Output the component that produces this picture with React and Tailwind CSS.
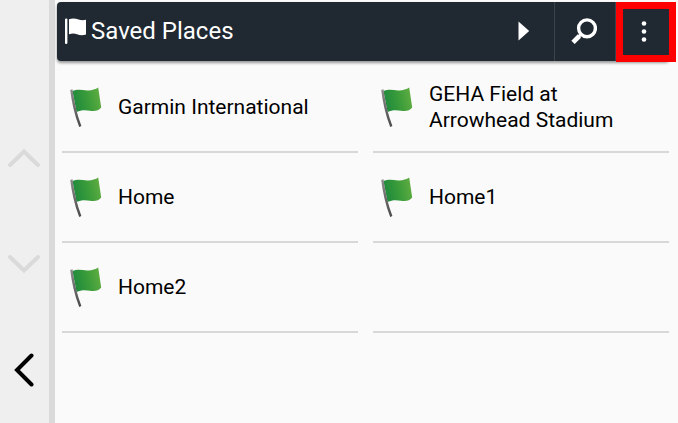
import { useState } from "react";

const places = [
  { id: 1, lines: ["Garmin International"] },
  { id: 2, lines: ["GEHA Field at", "Arrowhead Stadium"] },
  { id: 3, lines: ["Home"] },
  { id: 4, lines: ["Home1"] },
  { id: 5, lines: ["Home2"] },
];

function GreenFlag() {
  return (
    <svg width="32" height="42" viewBox="0 0 32 42" className="shrink-0" aria-hidden="true">
      <defs>
        <linearGradient id="flagGreen" x1="0" y1="0.4" x2="1" y2="0.2">
          <stop offset="0" stopColor="#1f8a3d" />
          <stop offset="0.5" stopColor="#3a9c3a" />
          <stop offset="1" stopColor="#63ae42" />
        </linearGradient>
        <linearGradient id="flagPole" x1="0" y1="0" x2="0" y2="1">
          <stop offset="0" stopColor="#8b8b8b" />
          <stop offset="1" stopColor="#4a4a4a" />
        </linearGradient>
      </defs>
      <path
        d="M2.4 5C7 3 12 3.9 17 4.4C21.5 4.6 25.5 3.6 28.2 1.6L31.2 21.6C29 24.8 25 25.4 20 24.8C15 24 11 24 6.6 26Z"
        fill="url(#flagGreen)"
      />
      <path d="M0.2 4L2.5 3.2C4.2 16 7 28.5 11.4 40L9.2 41C4.4 28.5 1.6 16 0.2 4Z" fill="url(#flagPole)" />
    </svg>
  );
}

function TitleFlag() {
  return (
    <svg width="22" height="26" viewBox="0 0 22 26" className="shrink-0" fill="#fff" aria-hidden="true">
      <rect x="0" y="0.5" width="2.4" height="25.5" rx="1" />
      <path d="M4 1.2C7 0 10.5 0.2 13.5 1.4C16 2.4 18.5 2.4 21 1.8V16.6C18 17.6 15 17.6 12 16.2C9.5 15.2 7 15.2 4 16.2Z" />
    </svg>
  );
}

function Sidebar({ onBack }) {
  return (
    <nav className="flex w-[55px] shrink-0 flex-col items-center border-r-[6px] border-[#dadada] bg-[#efefef] pt-[144px] pr-0.5">
      <button type="button" aria-label="Scroll up" disabled className="flex h-7 w-full items-center justify-center">
        <svg width="34" height="20" viewBox="0 0 34 20" fill="none" stroke="#dadada" strokeWidth="4" strokeLinecap="round">
          <path d="M3 17L17 3.5L31 17" />
        </svg>
      </button>
      <button type="button" aria-label="Scroll down" disabled className="mt-[78px] flex h-7 w-full items-center justify-center">
        <svg width="34" height="20" viewBox="0 0 34 20" fill="none" stroke="#dadada" strokeWidth="4" strokeLinecap="round">
          <path d="M3 3L17 16.5L31 3" />
        </svg>
      </button>
      <button type="button" aria-label="Back" onClick={onBack} className="mt-[72px] flex h-10 w-full items-center justify-center">
        <svg width="20" height="36" viewBox="0 0 20 36" fill="none" stroke="#000" strokeWidth="4" strokeLinecap="round">
          <path d="M17.5 3.5L3 18L17.5 32.5" />
        </svg>
      </button>
    </nav>
  );
}

function Header({ onMenu }) {
  return (
    <header className="mr-[9px] ml-[2px] flex h-[59px] rounded bg-[#202932] text-white shadow-[0_2px_3px_rgba(0,0,0,0.4)]">
      <div className="flex flex-1 items-center gap-1 pb-0.5 pl-2">
        <TitleFlag />
        <h1 className="text-2xl">Saved Places</h1>
      </div>
      <button type="button" aria-label="Next" className="flex w-[60px] items-center justify-center pb-0.5">
        <svg width="12" height="20" viewBox="0 0 12 20" fill="#fff">
          <path d="M0.5 0.5L11.2 10L0.5 19.5Z" />
        </svg>
      </button>
      <button type="button" aria-label="Search" className="flex w-[61px] items-center justify-center border-l border-[#3a424a] pr-0.5 pb-0.5">
        <svg width="26" height="26" viewBox="0 0 26 26" fill="none" stroke="#fff">
          <circle cx="16" cy="10.3" r="8.4" strokeWidth="3.4" />
          <path d="M10 16.2L7.5 18.7" strokeWidth="3" />
          <path d="M8.4 18L2 24.4" strokeWidth="4.6" />
        </svg>
      </button>
      <div className="relative w-[54px] border-l border-[#3a424a]">
        <button
          type="button"
          aria-label="Menu"
          onClick={onMenu}
          className="absolute top-0 left-0 flex h-[60px] w-[60px] items-center justify-center border-[7px] border-[#ff0000] bg-[#202932]"
        >
          <svg width="6" height="22" viewBox="0 0 6 22" fill="#fff" className="mr-[5px]">
            <circle cx="3" cy="2.5" r="2.3" />
            <circle cx="3" cy="10.5" r="2.3" />
            <circle cx="3" cy="18.5" r="2.3" />
          </svg>
        </button>
      </div>
    </header>
  );
}

function PlaceCell({ place }) {
  if (!place) {
    return <li className="h-[90px] border-b-2 border-[#d8d8d8]" />;
  }

  return (
    <li className="h-[90px] border-b-2 border-[#d8d8d8]">
      <button type="button" className="flex h-full w-full items-center gap-4 pl-2 text-left">
        <GreenFlag />
        <span className="text-[21px] leading-[26px]">
          {place.lines.map((line) => (
            <span key={line} className="block">{line}</span>
          ))}
        </span>
      </button>
    </li>
  );
}

export default function App() {
  const [, setMenuOpen] = useState(false);

  // the grid always shows three full rows
  const cells = [...places, ...Array(6 - places.length).fill(null)];

  return (
    <div className="flex min-h-screen bg-[#fafafa] font-[Roboto,sans-serif] text-black">
      <Sidebar onBack={() => setMenuOpen(false)} />
      <main className="flex-1 pt-[2px]">
        <Header onMenu={() => setMenuOpen((open) => !open)} />
        <ul className="mt-[2px] mr-[9px] ml-[7px] grid grid-cols-2 gap-x-[15px]">
          {cells.map((place, i) => (
            <PlaceCell key={place ? place.id : `empty-${i}`} place={place} />
          ))}
        </ul>
      </main>
    </div>
  );
}
